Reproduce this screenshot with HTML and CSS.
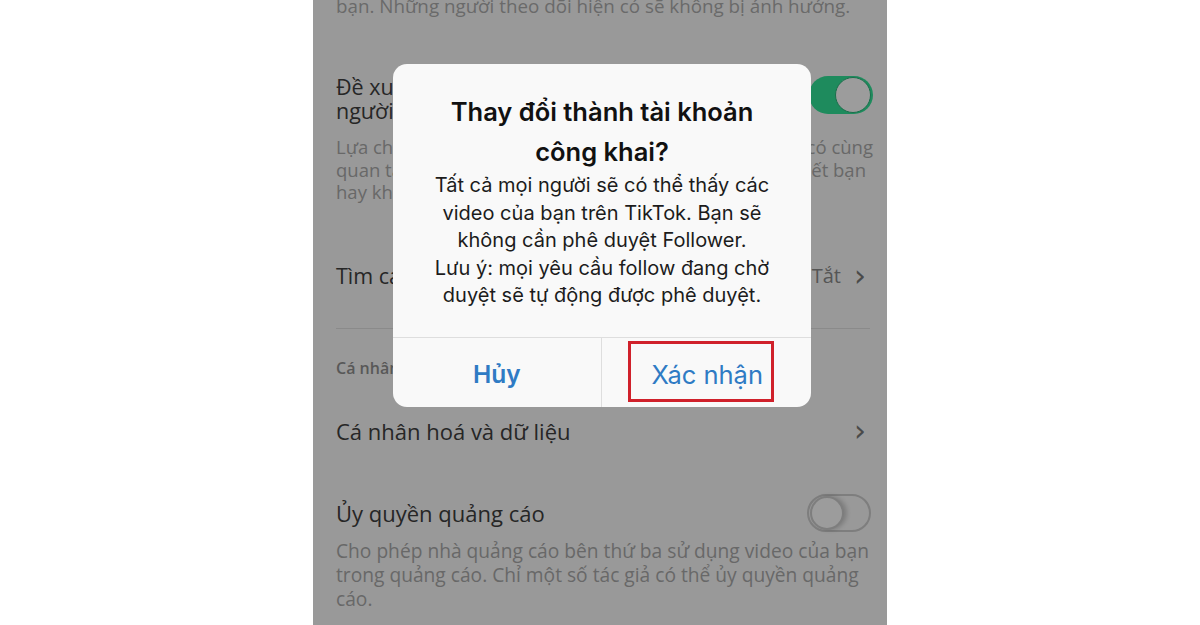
FILE: index.html
```html
<!DOCTYPE html>
<html lang="vi">
<head>
<meta charset="utf-8">
<title>Thay đổi thành tài khoản công khai</title>
<link rel="stylesheet" href="styles.css">
</head>
<body>
<div class="phone">
  <div class="top-note">bạn. Những người theo dõi hiện có sẽ không bị ảnh hưởng.</div>

  <div class="row row-top">
    <div class="title two-line">Đề xuất tài khoản của bạn cho<br>người khác</div>
    <span class="toggle on"><span class="knob"></span></span>
  </div>
  <div class="desc desc-1">
    <div class="jline"><span>Lựa chọn đề xuất tài khoản của bạn cho</span><span>những người có cùng</span></div>
    <div class="jline l2"><span>quan tâm, bạn bè và những người</span><span>biết bạn</span></div>
    <div class="jline"><span>hay không.</span></div>
  </div>

  <div class="row row-find">
    <div class="title">Tìm các liên hệ của bạn</div>
    <div class="value">Tắt <span class="chev">&#x203A;</span></div>
  </div>

  <div class="sep"></div>

  <div class="section">Cá nhân hoá và dữ liệu</div>

  <div class="row row-data">
    <div class="title big">Cá nhân hoá và dữ liệu</div>
    <span class="chev">&#x203A;</span>
  </div>

  <div class="row row-ads">
    <div class="title big">Ủy quyền quảng cáo</div>
    <span class="toggle off"><span class="knob"></span></span>
  </div>
  <div class="desc desc-2">Cho phép nhà quảng cáo bên thứ ba sử dụng video của bạn<br>trong quảng cáo. Chỉ một số tác giả có thể ủy quyền quảng<br>cáo.</div>

  <div class="dialog">
    <div class="dlg-body">
      <div class="dlg-title">Thay đổi thành tài khoản<br>công khai?</div>
      <div class="dlg-text">Tất cả mọi người sẽ có thể thấy các<br>video của bạn trên TikTok. Bạn sẽ<br>không cần phê duyệt Follower.<br>Lưu ý: mọi yêu cầu follow đang chờ<br>duyệt sẽ tự động được phê duyệt.</div>
    </div>
    <div class="dlg-actions">
      <div class="btn cancel">Hủy</div>
      <div class="btn confirm">Xác nhận<span class="mark"></span></div>
    </div>
  </div>
</div>
</body>
</html>
```
FILE: styles.css
```css
* { box-sizing: border-box; }
html, body { margin: 0; padding: 0; background: #ffffff; }
body { width: 1200px; height: 625px; overflow: hidden; }

.phone {
  position: relative;
  margin-left: 313px;
  width: 574px;
  height: 625px;
  background: #999999;
  padding: 0 14px 0 23px;
  font-family: "Open Sans", "Noto Sans", sans-serif;
  color: #262626;
  overflow: hidden;
}

.top-note {
  margin-top: -5px;
  font-size: 18.8px;
  line-height: 23px;
  color: #6a6a6a;
  white-space: nowrap;
}

.row { display: flex; justify-content: space-between; align-items: center; }
.title { font-size: 21.5px; line-height: 24px; color: #262626; }
.title.big { font-size: 22px; line-height: 26px; }

.row-top { margin-top: 57px; align-items: flex-start; }
.row-top .toggle { margin-top: 1px; }

.desc { color: #686868; font-size: 18.5px; }
.desc-1 { margin-top: 13px; line-height: 22.5px; }
.jline { display: flex; justify-content: space-between; white-space: nowrap; }
.jline.l2 { padding-right: 7px; }

.row-find { margin-top: 60px; padding-right: 7px; height: 24px; }
.value { font-size: 20px; color: #555555; display: flex; align-items: center; gap: 13px; line-height: 24px; }
.chev { font-family: "DejaVu Sans", sans-serif; font-size: 30px; line-height: 24px; color: #4a4a4a; }

.sep { margin-top: 40px; height: 1px; background: #8a8a8a; margin-right: 3px; }

.section { margin-top: 29px; font-size: 16px; line-height: 20px; font-weight: 600; color: #585858; }

.row-data { margin-top: 40px; padding-right: 7px; height: 26px; }
.row-ads { margin-top: 50px; padding-right: 2px; }

.desc-2 { margin-top: 7px; line-height: 24px; font-size: 19.2px; white-space: nowrap; }

.toggle {
  position: relative;
  width: 64px;
  height: 38px;
  border-radius: 19px;
  flex: none;
}
.toggle .knob {
  position: absolute;
  top: 1px;
  width: 36px;
  height: 36px;
  border-radius: 50%;
  background: #9c9c9c;
}
.toggle.on { background: #1e8b5d; }
.toggle.on .knob { right: 2px; border: 1px solid #1a6f4b; }
.toggle.off { border: 2px solid #7e7e7e; background: #999999; }
.toggle.off .knob { left: 1px; top: 0; width: 34px; height: 34px; border: 2px solid #7e7e7e; box-shadow: 3px 0 4px rgba(0,0,0,0.18); }

.dialog {
  position: absolute;
  left: 80px;
  top: 64px;
  width: 418px;
  height: 343px;
  background: #f9f9f9;
  border-radius: 14px;
  display: flex;
  flex-direction: column;
  font-family: Inter, "Noto Sans", sans-serif;
  overflow: hidden;
}
.dlg-body {
  padding: 28px 4px 27px;
  text-align: center;
  border-bottom: 1px solid #dedede;
}
.dlg-title {
  font-size: 25.5px;
  line-height: 40px;
  font-weight: 600;
  color: #111111;
}
.dlg-text {
  font-size: 20px;
  line-height: 27.5px;
  color: #1c1c1c;
  white-space: nowrap;
}
.dlg-actions { flex: 1; display: flex; }
.btn {
  position: relative;
  flex: 1;
  display: flex;
  align-items: center;
  justify-content: center;
  padding-top: 4px;
  font-size: 24.5px;
  color: #2f7bc4;
}
.btn.cancel { font-weight: 600; border-right: 1px solid #dedede; }
.btn.confirm { font-weight: 400; padding-left: 2px; font-size: 25.5px; }
.mark {
  position: absolute;
  left: 26px;
  top: 3px;
  width: 146px;
  height: 61px;
  border: 3px solid #d0212b;
}
```
